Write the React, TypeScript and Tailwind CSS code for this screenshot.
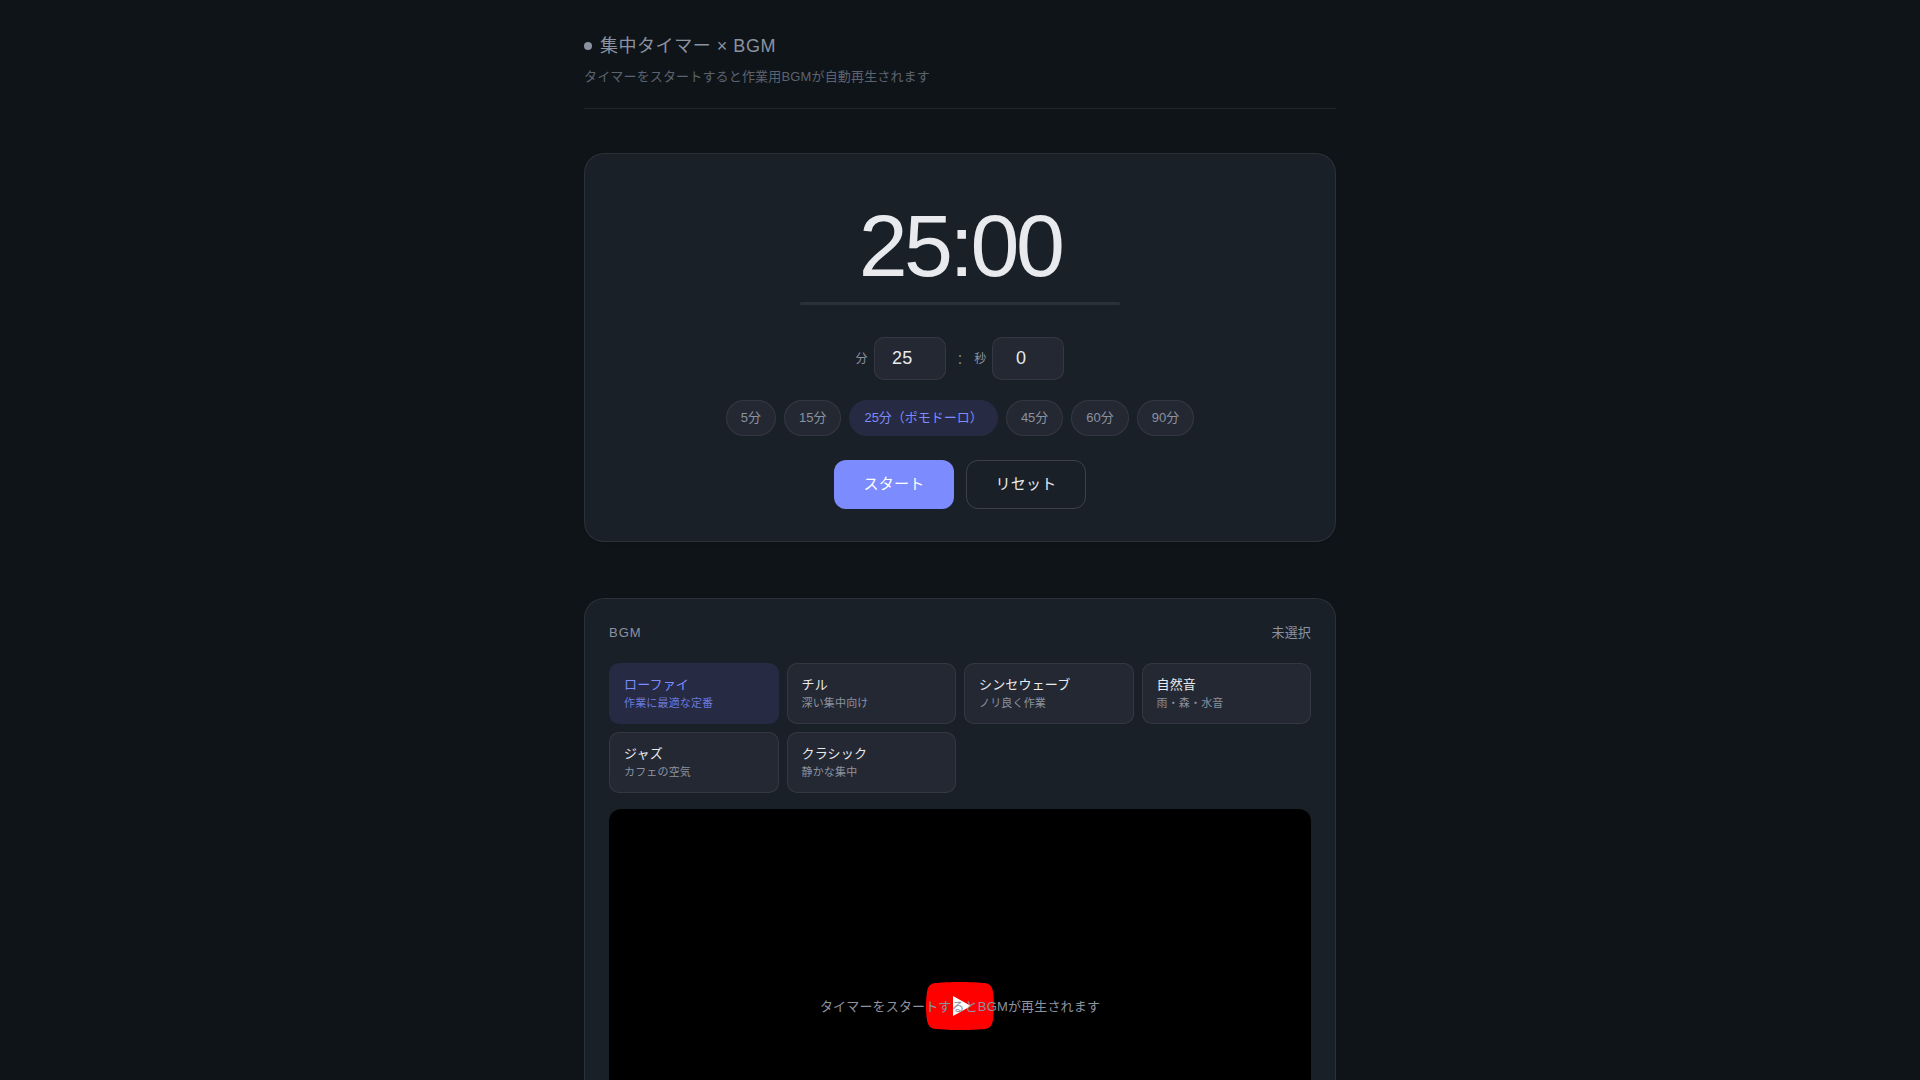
import { useState } from 'react';

interface Preset {
    label: string,
    minutes: number,
}

interface Genre {
    id: string,
    name: string,
    description: string,
}

const PRESETS: Preset[] = [
    { label: '5分', minutes: 5 },
    { label: '15分', minutes: 15 },
    { label: '25分（ポモドーロ）', minutes: 25 },
    { label: '45分', minutes: 45 },
    { label: '60分', minutes: 60 },
    { label: '90分', minutes: 90 },
];

const GENRES: Genre[] = [
    { id: 'lofi', name: 'ローファイ', description: '作業に最適な定番' },
    { id: 'chill', name: 'チル', description: '深い集中向け' },
    { id: 'synthwave', name: 'シンセウェーブ', description: 'ノリ良く作業' },
    { id: 'nature', name: '自然音', description: '雨・森・水音' },
    { id: 'jazz', name: 'ジャズ', description: 'カフェの空気' },
    { id: 'classic', name: 'クラシック', description: '静かな集中' },
];

const CARD = 'rounded-[20px] border border-white/8 bg-[#1a2028] shadow-[0_1px_3px_rgba(0,0,0,0.12)]';
const NUMBER_INPUT = 'h-[43px] w-[72px] rounded-[10px] border border-white/8 bg-[#242833] px-3 text-center text-lg text-[#e8eaed] outline-none';

const pad = (n: number) => String(n).padStart(2, '0');

const Header: React.FC = () => (
    <header className="border-b border-white/8 pb-[21px]">
        <h1 className="flex items-center gap-2 text-lg leading-7 tracking-[0.03em] text-[#8b92a0]">
            <span className="size-2 rounded-full bg-[#8b92a0]" />
            集中タイマー × BGM
        </h1>
        <p className="mt-[7px] text-[13px] leading-5 text-[#5c6370]">
            タイマーをスタートすると作業用BGMが自動再生されます
        </p>
    </header>
);

const PlayIcon: React.FC = () => (
    <svg viewBox="0 0 68 48" className="h-12 w-[68px]" aria-hidden="true">
        <path
            fill="#f00"
            d="M66.52,7.74c-0.78-2.93-2.49-5.41-5.42-6.19C55.79,.13,34,0,34,0S12.21,.13,6.9,1.55 C3.97,2.33,2.27,4.81,1.48,7.74C0.06,13.05,0,24,0,24s0.06,10.95,1.48,16.26c0.78,2.93,2.49,5.41,5.42,6.19 C12.21,47.87,34,48,34,48s21.79-0.13,27.1-1.55c2.93-0.78,4.64-3.26,5.42-6.19C67.94,34.95,68,24,68,24S67.94,13.05,66.52,7.74z"
        />
        <path fill="#fff" d="M45,24 27,14 27,34" />
    </svg>
);

const App: React.FC = () => {
    const [minutes, setMinutes] = useState(25);
    const [seconds, setSeconds] = useState(0);
    const [genre, setGenre] = useState('lofi');

    const reset = () => {
        setMinutes(25);
        setSeconds(0);
    };

    return (
        <div className="min-h-screen bg-[#0f1419] font-['Liberation_Sans','Noto_Sans_CJK_JP',sans-serif] tracking-[0.01em] text-[#e8eaed]">
            <div className="mx-auto max-w-[800px] px-6 pt-8 pb-12">
                <Header />

                <main className="mt-11 flex flex-col gap-14">
                    <section className={`${CARD} flex flex-col items-center px-6 pt-12 pb-8`}>
                        <div className="text-[88px] leading-[88px] tracking-[-0.04em] tabular-nums">
                            {pad(minutes)}:{pad(seconds)}
                        </div>
                        <div className="mt-3 h-[3px] w-80 max-w-full rounded-full bg-white/8" />

                        <div className="mt-8 flex items-center gap-1.5 text-xs text-[#8b92a0]">
                            <label htmlFor="minutes">分</label>
                            <input
                                id="minutes"
                                type="number"
                                min={0}
                                max={180}
                                value={minutes}
                                onChange={(e) => setMinutes(Number(e.target.value))}
                                className={NUMBER_INPUT}
                            />
                            <span className="mx-1.5 text-base">:</span>
                            <label htmlFor="seconds">秒</label>
                            <input
                                id="seconds"
                                type="number"
                                min={0}
                                max={59}
                                value={seconds}
                                onChange={(e) => setSeconds(Number(e.target.value))}
                                className={NUMBER_INPUT}
                            />
                        </div>

                        <div className="mt-5 flex flex-wrap justify-center gap-2">
                            {PRESETS.map((preset) => (
                                <button
                                    key={preset.minutes}
                                    type="button"
                                    onClick={() => setMinutes(preset.minutes)}
                                    className={`h-9 rounded-full border px-3.5 text-[13px] tracking-normal ${preset.minutes === minutes
                                        ? 'border-transparent bg-[#262a42] text-[#7c8cff]'
                                        : 'border-white/8 bg-[#242833] text-[#8b92a0]'
                                        }`}
                                >
                                    {preset.label}
                                </button>
                            ))}
                        </div>

                        <div className="mt-6 flex gap-3">
                            <button type="button" className="h-[49px] min-w-[120px] rounded-xl bg-[#7c8cff] px-7 text-[15px] tracking-[0.02em] text-white">
                                スタート
                            </button>
                            <button type="button" onClick={reset} className="h-[49px] min-w-[120px] rounded-xl border border-white/15 px-7 text-[15px] tracking-[0.02em]">
                                リセット
                            </button>
                        </div>
                    </section>

                    <section className={`${CARD} p-6`}>
                        <div className="flex items-center justify-between text-[13px] leading-5 text-[#8b92a0]">
                            <h2 className="tracking-[0.08em]">BGM</h2>
                            <span>未選択</span>
                        </div>

                        <div className="mt-5 grid grid-cols-2 gap-2 sm:grid-cols-4">
                            {GENRES.map(({ id, name, description }) => (
                                <button
                                    key={id}
                                    type="button"
                                    onClick={() => setGenre(id)}
                                    className={`flex h-[61px] flex-col justify-start rounded-[10px] border px-3.5 pt-[11px] text-left ${id === genre
                                        ? 'border-transparent bg-[#262a42] text-[#7c8cff]'
                                        : 'border-white/8 bg-[#242833]'
                                        }`}
                                >
                                    <span className="text-[13px] leading-5">{name}</span>
                                    <span className={`text-[11px] leading-4 ${id === genre ? 'opacity-80' : 'text-[#8b92a0]'}`}>
                                        {description}
                                    </span>
                                </button>
                            ))}
                        </div>

                        <div className="relative mt-4 flex aspect-video items-center justify-center overflow-hidden rounded-xl bg-black">
                            <PlayIcon />
                            <p className="absolute inset-0 flex items-center justify-center text-[13px] text-[#8b92a0]">
                                タイマーをスタートするとBGMが再生されます
                            </p>
                        </div>
                    </section>
                </main>
            </div>
        </div>
    );
};

export default App;
